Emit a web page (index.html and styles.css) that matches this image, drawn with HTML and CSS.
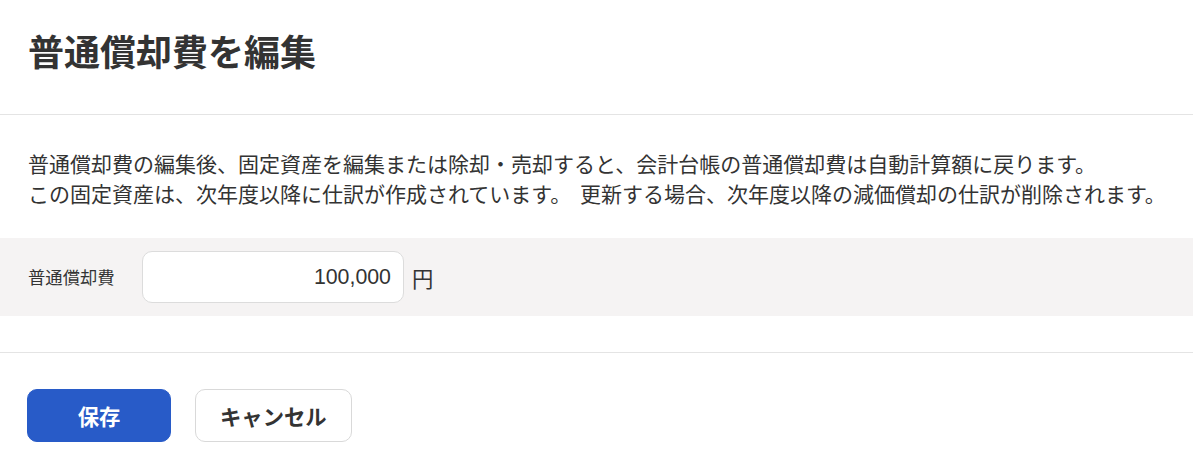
FILE: index.html
```html
<!DOCTYPE html>
<html lang="ja">
<head>
<meta charset="utf-8">
<title>普通償却費を編集</title>
<link rel="stylesheet" href="styles.css">
</head>
<body>
<div class="dialog">
  <header class="dialog-header">
    <h1 class="dialog-title">普通償却費を編集</h1>
  </header>
  <section class="dialog-body">
    <p class="notice">普通償却費の編集後、固定資産を編集または除却・売却すると、会計台帳の普通償却費は自動計算額に戻ります。<br>この固定資産は、次年度以降に仕訳が作成されています。 更新する場合、次年度以降の減価償却の仕訳が削除されます。</p>
    <div class="field-row">
      <label class="field-label" for="amount">普通償却費</label>
      <input class="field-input" id="amount" type="text" value="100,000">
      <span class="field-unit">円</span>
    </div>
  </section>
  <footer class="dialog-footer">
    <button class="btn btn-primary" type="button">保存</button>
    <button class="btn btn-secondary" type="button">キャンセル</button>
  </footer>
</div>
</body>
</html>
```

FILE: styles.css
```css
* { box-sizing: border-box; }
html, body { margin: 0; padding: 0; background: #fff; }
body {
  font-family: "Noto Sans CJK JP", "Noto Sans", sans-serif;
  color: #333;
  width: 1193px;
}
.dialog-header {
  padding: 23px 28px 37px;
  border-bottom: 1px solid #e4e4e4;
}
.dialog-title {
  margin: 0;
  font-size: 36px;
  line-height: 54px;
  font-weight: 700;
  color: #333;
}
.dialog-body {
  padding-top: 33px;
  padding-bottom: 36px;
  border-bottom: 1px solid #e4e4e4;
}
.notice {
  margin: 0 0 30px 28px;
  font-size: 21px;
  line-height: 30px;
  white-space: nowrap;
  word-spacing: 4px;
  color: #333;
}
.field-row {
  display: flex;
  align-items: center;
  background: #f5f3f3;
  padding: 13px 28px;
}
.field-label {
  width: 114px;
  font-size: 17.33px;
  line-height: 24px;
  color: #333;
}
.field-input {
  width: 262px;
  height: 52px;
  border: 1px solid #dcdcdc;
  border-radius: 10px;
  background: #fff;
  text-align: right;
  padding: 0 12px;
  font-family: "Liberation Sans", "Noto Sans CJK JP", sans-serif;
  font-size: 21.33px;
  color: #333;
  outline: none;
}
.field-unit {
  margin-left: 8px;
  font-size: 21.33px;
  color: #333;
}
.dialog-footer {
  display: flex;
  gap: 24px;
  padding: 36px 27px 26px;
}
.btn {
  height: 53px;
  border-radius: 10px;
  font-family: "Noto Sans CJK JP", sans-serif;
  font-size: 21.33px;
  font-weight: 700;
  padding: 0 24px;
  cursor: pointer;
}
.btn-primary {
  min-width: 144px;
  background: #285bc8;
  border: 1px solid #285bc8;
  color: #fff;
}
.btn-secondary {
  background: #fff;
  border: 1px solid #d9d9d9;
  color: #333;
}
```
